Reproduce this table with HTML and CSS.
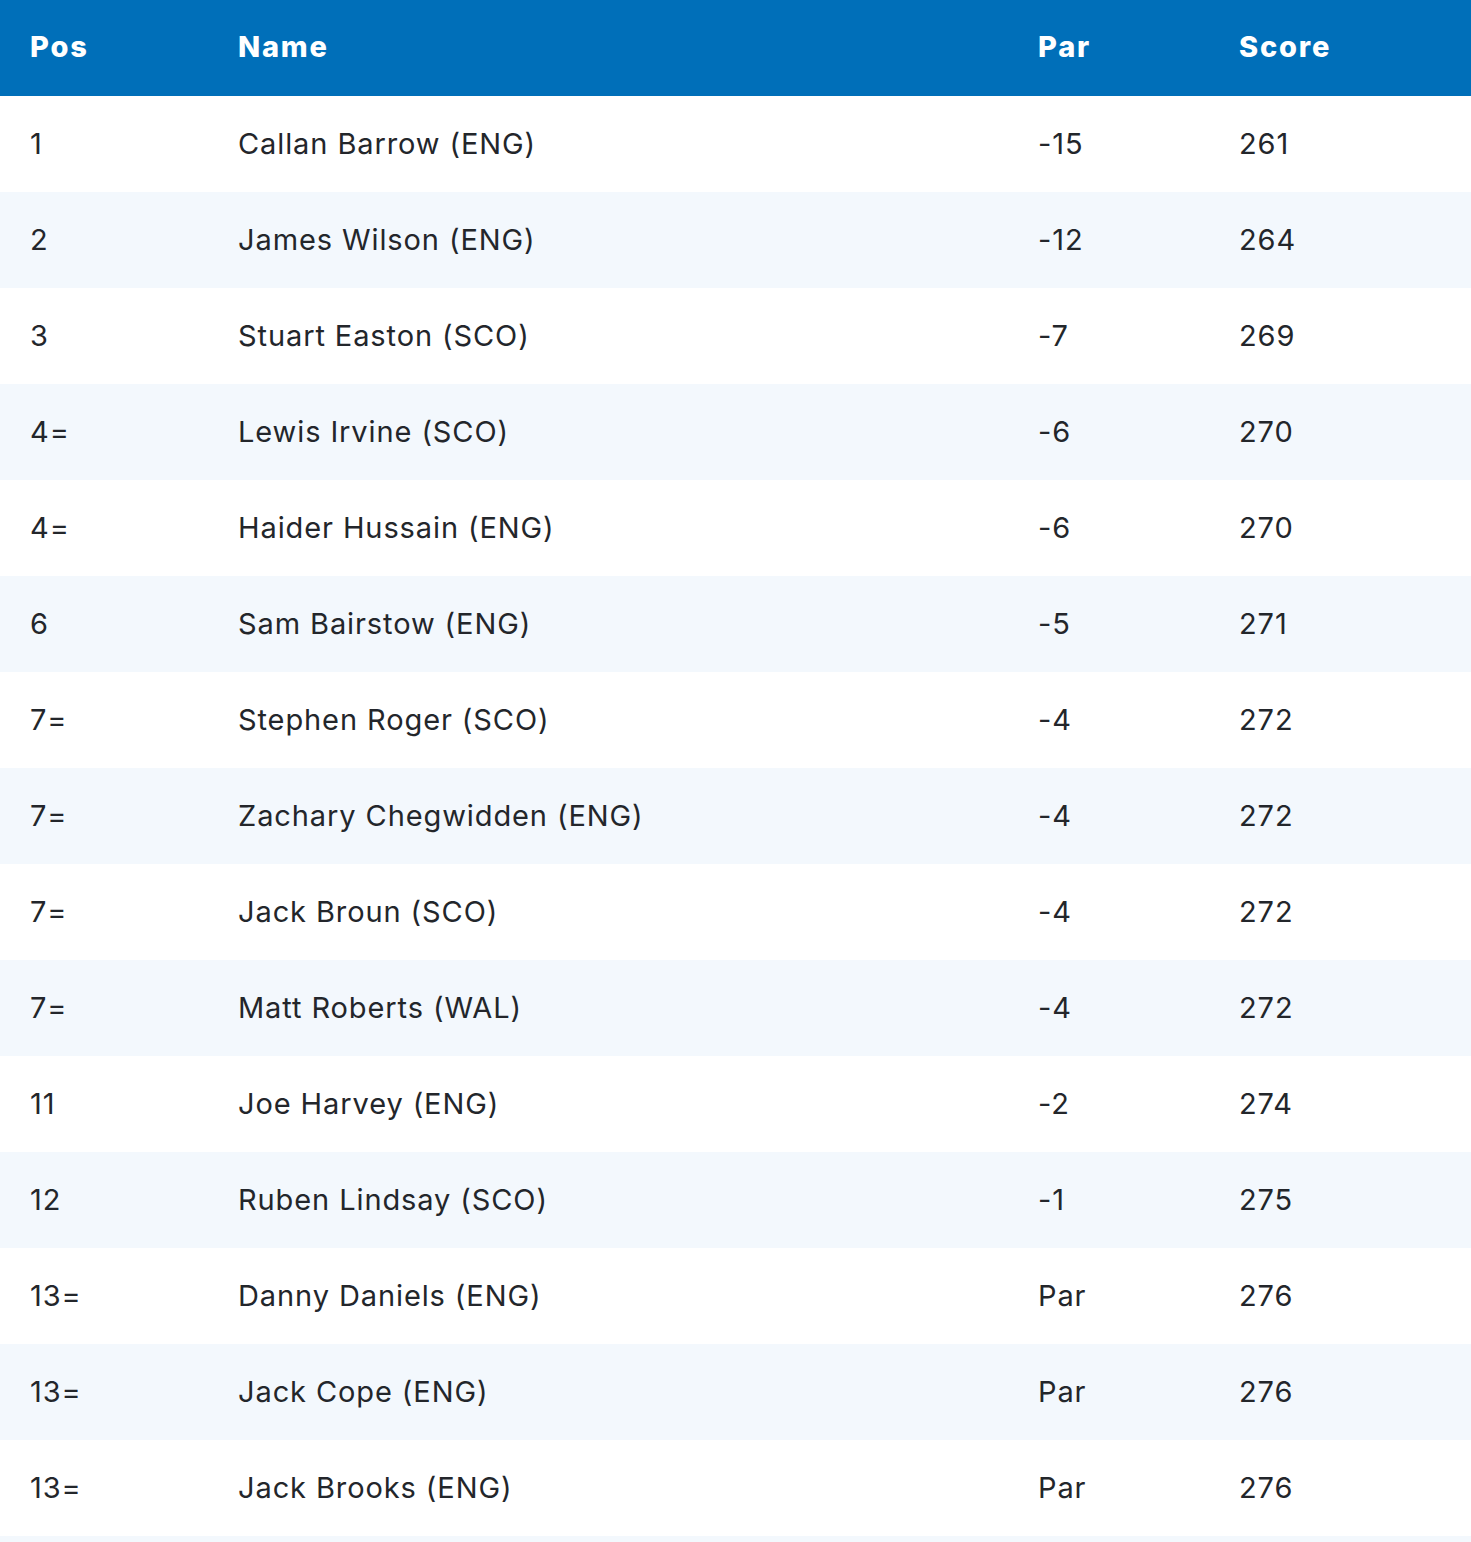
FILE: index.html
```html
<!DOCTYPE html>
<html lang="en">
<head>
<meta charset="utf-8">
<title>Leaderboard</title>
<link rel="stylesheet" href="styles.css">
</head>
<body>
<table class="board">
  <colgroup>
    <col class="c-pos"><col class="c-name"><col class="c-par"><col class="c-score">
  </colgroup>
  <thead>
    <tr><th>Pos</th><th>Name</th><th>Par</th><th>Score</th></tr>
  </thead>
  <tbody>
    <tr><td>1</td><td>Callan Barrow (ENG)</td><td>-15</td><td>261</td></tr>
    <tr><td>2</td><td>James Wilson (ENG)</td><td>-12</td><td>264</td></tr>
    <tr><td>3</td><td>Stuart Easton (SCO)</td><td>-7</td><td>269</td></tr>
    <tr><td>4=</td><td>Lewis Irvine (SCO)</td><td>-6</td><td>270</td></tr>
    <tr><td>4=</td><td>Haider Hussain (ENG)</td><td>-6</td><td>270</td></tr>
    <tr><td>6</td><td>Sam Bairstow (ENG)</td><td>-5</td><td>271</td></tr>
    <tr><td>7=</td><td>Stephen Roger (SCO)</td><td>-4</td><td>272</td></tr>
    <tr><td>7=</td><td>Zachary Chegwidden (ENG)</td><td>-4</td><td>272</td></tr>
    <tr><td>7=</td><td>Jack Broun (SCO)</td><td>-4</td><td>272</td></tr>
    <tr><td>7=</td><td>Matt Roberts (WAL)</td><td>-4</td><td>272</td></tr>
    <tr><td>11</td><td>Joe Harvey (ENG)</td><td>-2</td><td>274</td></tr>
    <tr><td>12</td><td>Ruben Lindsay (SCO)</td><td>-1</td><td>275</td></tr>
    <tr><td>13=</td><td>Danny Daniels (ENG)</td><td>Par</td><td>276</td></tr>
    <tr><td>13=</td><td>Jack Cope (ENG)</td><td>Par</td><td>276</td></tr>
    <tr><td>13=</td><td>Jack Brooks (ENG)</td><td>Par</td><td>276</td></tr>
    <tr class="filler"><td></td><td></td><td></td><td></td></tr>
  </tbody>
</table>
</body>
</html>
```

FILE: styles.css
```css
html, body {
  margin: 0;
  padding: 0;
  background: #ffffff;
}

body {
  font-family: Inter, "Noto Sans", "Liberation Sans", sans-serif;
  color: #23262b;
}

.board {
  width: 1471px;
  border-collapse: collapse;
  table-layout: fixed;
}

.c-pos { width: 208px; }
.c-name { width: 800px; }
.c-par { width: 201px; }
.c-score { width: 262px; }

.board th,
.board td {
  height: 96px;
  padding: 0 0 2px 30px;
  text-align: left;
  vertical-align: middle;
  box-sizing: border-box;
  white-space: nowrap;
}

.board thead th {
  background: #006fb9;
  color: #ffffff;
  font-size: 29px;
  font-weight: 800;
  letter-spacing: 1.8px;
  padding-bottom: 4px;
}

.board tbody td {
  font-size: 29px;
  font-weight: 400;
  letter-spacing: 0.9px;
}

.board tbody tr:nth-child(even) td {
  background: #f3f8fd;
}
```
